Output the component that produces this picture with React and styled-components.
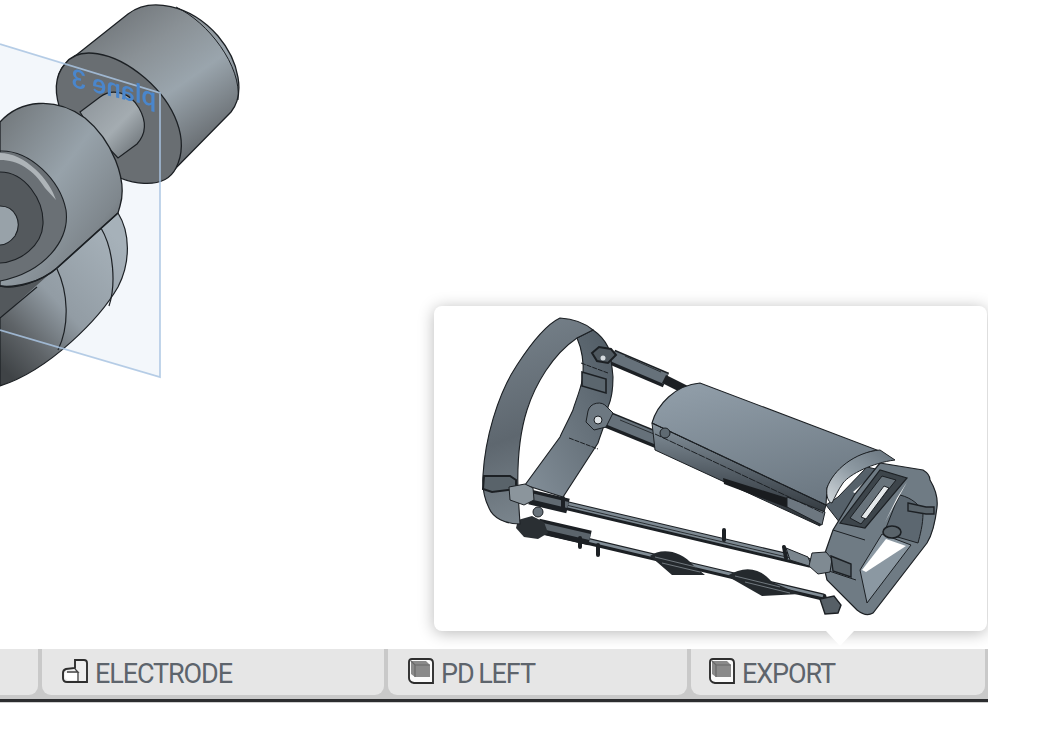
import React from 'react';
import styled, { createGlobalStyle } from 'styled-components';

const GlobalStyle = createGlobalStyle`
  html, body {
    margin: 0;
    height: 100%;
    background: #fff;
    overflow: hidden;
    font-family: Roboto, "Liberation Sans", sans-serif;
  }
`;

const LINE = '#1c2024';

function PartIcon() {
  return (
    <TabIcon viewBox="0 0 26 26">
      <path d="M13 2h9q3 0 3 3v19H5q-4 0-4-4v-5q0-3 3-4l9-1z" fill="#eee" stroke="#2e2e2e" strokeWidth="1.9" />
      <path d="M13 11l3 3H5M16 14v9" fill="none" stroke="#444" strokeWidth="1.3" />
      <path d="M3 15h12v7H6q-3-1-3-3z" fill="#fff" />
    </TabIcon>
  );
}

function AssemblyIcon() {
  return (
    <TabIcon viewBox="0 0 26 26">
      <path d="M4 1h17q4 0 4 4v20H6q-5-1-5-5V4q0-3 3-3z" fill="#fafafa" stroke="#2e2e2e" strokeWidth="1.9" />
      <path d="M3 3h15l4 4v12H7l-4-3z" fill="#8a8a8a" />
      <path d="M3 3l4 4h15M7 7v12" fill="none" stroke="#686868" strokeWidth="1.2" />
    </TabIcon>
  );
}

function PlaneArt() {
  return (
    <Art viewBox="0 0 988 649">
      <defs>
        <linearGradient id="barrel" x1="0.2" y1="0.05" x2="0.85" y2="0.95">
          <stop offset="0" stopColor="#6d7276" />
          <stop offset="0.3" stopColor="#8a9196" />
          <stop offset="0.55" stopColor="#9aa5ad" />
          <stop offset="0.82" stopColor="#70767b" />
          <stop offset="1" stopColor="#505559" />
        </linearGradient>
        <linearGradient id="bulb" x1="0.1" y1="0" x2="0.9" y2="0.9">
          <stop offset="0" stopColor="#747a7e" />
          <stop offset="0.45" stopColor="#97a2aa" />
          <stop offset="0.8" stopColor="#7f878d" />
          <stop offset="1" stopColor="#5d6266" />
        </linearGradient>
        <linearGradient id="lower" x1="0.85" y1="0.1" x2="0.15" y2="1">
          <stop offset="0" stopColor="#a6b1b9" />
          <stop offset="0.5" stopColor="#929ca4" />
          <stop offset="0.78" stopColor="#5f6468" />
          <stop offset="1" stopColor="#3f4346" />
        </linearGradient>
        <linearGradient id="neck" x1="0" y1="0" x2="1" y2="1">
          <stop offset="0" stopColor="#8b9298" />
          <stop offset="0.55" stopColor="#a4acb1" />
          <stop offset="1" stopColor="#5f656a" />
        </linearGradient>
      </defs>

      <path d="M0 44L160 93V377L0 330z" fill="#f3f7fb" />

      <path d="M118 213C130 232 131 262 118 287C100 318 50 370 0 386V270z" fill="url(#lower)" stroke={LINE} strokeWidth="1.2" />
      <path d="M101 228C114 250 116 285 109 306M57 269C68 292 70 325 58 350" fill="none" stroke={LINE} strokeWidth="1.2" />
      <path d="M118 213L57 268C42 282 15 288 0 286V318z" fill="#53585c" />
      <path d="M0 318L37 287" fill="none" stroke={LINE} strokeWidth="1.2" />

      <path d="M65 64L128 14C150 -3 190 4 218 36C240 62 245 95 231 112L172 172C150 190 105 175 80 140C58 112 50 80 65 64z" fill="url(#barrel)" stroke={LINE} strokeWidth="1.3" />
      <path d="M176 7C208 22 242 66 238 100" fill="none" stroke={LINE} strokeWidth="1" />
      <path d="M65 64C78 46 112 50 145 78C175 104 190 140 176 168C165 190 128 188 98 165C70 142 42 90 65 64z" fill="#696e72" stroke={LINE} strokeWidth="1.3" />
      <path d="M80 112L100 97C112 88 130 92 139 108C147 122 146 134 137 144L118 158L90 128z" fill="url(#neck)" stroke={LINE} strokeWidth="1.2" />

      <path d="M0 122C20 100 55 96 85 118C112 140 128 180 120 206L118 213L57 268C40 282 15 290 0 286z" fill="url(#bulb)" stroke={LINE} strokeWidth="1.3" />
      <path d="M0 152C30 150 60 180 66 210C70 240 45 272 0 281z" fill="#6a7075" />
      <path d="M0 172C25 172 44 200 43 224C42 246 20 262 0 263z" fill="#54595d" />
      <path d="M0 206C15 206 23 222 15 236Q8 245 0 245z" fill="#98a2a9" />
      <path d="M0 160C18 160 34 170 45 188L56 200C50 180 25 153 0 153z" fill="#bfc5c9" opacity="0.8" />
      <path d="M0 151C30 150 60 180 66 210C70 240 45 272 0 281M0 206C15 206 23 222 15 236Q8 245 0 245M0 172C25 172 44 200 43 224C42 246 20 262 0 263" fill="none" stroke={LINE} strokeWidth="1.1" />
      <path d="M118 213L57 268C42 282 15 288 0 286" fill="none" stroke={LINE} strokeWidth="1.6" />

      <path d="M0 44L160 93V377L0 330" fill="none" stroke="#a9c4e2" strokeWidth="1.7" opacity="0.85" />
      <PlaneLabel transform="matrix(-1 -0.24 0 1 156 107)">plane 3</PlaneLabel>
    </Art>
  );
}

function DeviceArt() {
  return (
    <Art viewBox="434 306 553 325">
      <defs>
        <linearGradient id="band" x1="0.3" y1="0" x2="0.5" y2="1">
          <stop offset="0" stopColor="#76818a" />
          <stop offset="0.55" stopColor="#5e676f" />
          <stop offset="1" stopColor="#7d8890" />
        </linearGradient>
        <linearGradient id="inner" x1="1" y1="0" x2="0" y2="1">
          <stop offset="0" stopColor="#4f5a63" />
          <stop offset="0.5" stopColor="#69747d" />
          <stop offset="1" stopColor="#84909a" />
        </linearGradient>
        <linearGradient id="top" x1="0.3" y1="0" x2="0.7" y2="1">
          <stop offset="0" stopColor="#8f9ca7" />
          <stop offset="1" stopColor="#6b7781" />
        </linearGradient>
        <linearGradient id="side" x1="0.55" y1="0" x2="0.45" y2="1">
          <stop offset="0" stopColor="#8b98a2" />
          <stop offset="0.55" stopColor="#4d565e" />
          <stop offset="1" stopColor="#23282c" />
        </linearGradient>
        <linearGradient id="cap" x1="0" y1="1" x2="1" y2="0">
          <stop offset="0" stopColor="#d3d9dd" />
          <stop offset="0.5" stopColor="#8d99a2" />
          <stop offset="1" stopColor="#66727c" />
        </linearGradient>
      </defs>

      {/* rods on the open side */}
      <path d="M530 497L810 563" stroke={LINE} strokeWidth="9" strokeLinecap="round" />
      <path d="M530 496L810 562" stroke="#7d8992" strokeWidth="5" />
      <path d="M530 496.5L810 562.5" stroke="#2a2f33" strokeWidth="1" />
      <path d="M540 530L823 597" stroke={LINE} strokeWidth="7" strokeLinecap="round" />
      <path d="M540 529L823 596" stroke="#808c95" strokeWidth="2.8" />
      <path d="M538 526L590 538" stroke={LINE} strokeWidth="15" />
      <path d="M538 525L590 537" stroke="#5b646b" strokeWidth="6" />
      <path d="M530 497L568 506" stroke={LINE} strokeWidth="15" />
      <path d="M530 496L568 505" stroke="#616a71" strokeWidth="6" />
      <path d="M650 556C660 548 680 549 694 566L705 575L672 575z" fill="#24292d" />
      <path d="M727 576C745 565 760 568 772 582L800 594L762 596z" fill="#24292d" />
      <path d="M655 557L696 567M662 563L700 572M735 576L780 587M745 582L790 593" stroke="#70787e" strokeWidth="1" />
      <path d="M724 530v10M784 547l2 11M563 498v12M598 545v10M580 538v9" stroke={LINE} strokeWidth="4" strokeLinecap="round" />
      <path d="M786 548L808 557L812 567L790 560z" fill="#7b868e" stroke={LINE} />
      <path d="M518 520l14-4 12 6 4 11-10 6-14-2-8-9z" fill="#2a2f33" />
      <circle cx="538" cy="512" r="5" fill="#69737b" stroke={LINE} />

      {/* rods towards the case */}
      <path d="M612 357L666 380" stroke={LINE} strokeWidth="16" />
      <path d="M612 356L666 379" stroke="#66717a" strokeWidth="11" />
      <path d="M664 379L690 392" stroke={LINE} strokeWidth="9" />
      <path d="M606 419L660 441" stroke={LINE} strokeWidth="17" />
      <path d="M606 418L660 440" stroke="#66717a" strokeWidth="12" />
      <path d="M625 356l36 16M620 420l34 14" stroke="#2a2f33" strokeWidth="1" />

      {/* left band */}
      <path d="M577 338C581 347 584 362 583 377C580 392 574 405 573 410C566 425 562 432 560 437L525 485L563 497L598 443C602 430 608 418 608 407C613 396 613 385 613 377C612 365 611 357 608 347C604 339 599 334 593 330z" fill="url(#inner)" stroke={LINE} strokeWidth="1.1" />
      <path d="M560 318C575 319 586 324 593 330L577 338C552 355 535 385 527 410C520 432 517 460 518 492L520 524C505 524 493 518 489 508C484 498 482 488 483 475C485 440 497 395 517 365C530 345 545 325 560 318z" fill="url(#band)" stroke={LINE} strokeWidth="1.1" />
      <path d="M581 363L608 373M569 438L598 449" fill="none" stroke={LINE} strokeWidth="1" strokeDasharray="5 1" />
      <path d="M582 372l24 7v14l-24-7z" fill="#5b666e" stroke={LINE} strokeWidth="1.6" />
      <path d="M588 411a11 11 0 0 1 19-4l6 6-7 14-12 3-8-8z" fill="#6d7881" stroke={LINE} />
      <circle cx="598" cy="420" r="4" fill="#dfe4e7" stroke={LINE} />
      <path d="M592 353l7-6 12 2 5 6-8 8-11-2z" fill="#4f585f" stroke={LINE} strokeWidth="2" />
      <circle cx="603" cy="358" r="2.5" fill="#d5dade" />
      <path d="M484 476h26l6 4v9l-24 3-9-3z" fill="#59636a" stroke={LINE} strokeWidth="2" />
      <path d="M509 487l16-3 8 4 1 12-10 5-14-5z" fill="#8b959c" stroke={LINE} />

      {/* case */}
      <path d="M652 423L655 450L820 526L826 505z" fill="url(#side)" stroke={LINE} strokeWidth="1" />
      <path d="M723 478L787 498L788 508L724 484z" fill="#191c1f" />
      <path d="M787 497L825 512L822 525L787 507z" fill="#6d7780" stroke={LINE} />
      <path d="M652 423C657 405 675 385 700 383L877 450C855 455 835 468 827 488L826 505z" fill="url(#top)" stroke={LINE} strokeWidth="1.1" />
      <path d="M652 423L826 505M655 434L823 513" fill="none" stroke={LINE} strokeWidth="1" strokeDasharray="7 1" />
      <circle cx="665" cy="433" r="5" fill="#5f6a72" stroke={LINE} />

      {/* right band */}
      <path d="M826 505L840 523L880 470L867 467L838 497z" fill="#56616a" stroke={LINE} />
      <path d="M853 492L867 480L858 495z" fill="#fff" />
      <path d="M880 463L923 470C928 473 930 477 930 480C936 490 938 498 937 507C935 525 932 535 927 543L873 613C868 616 862 614 857 610L827 580C824 570 824 560 825 553L833 530L855 494z" fill="#6f7b84" stroke={LINE} strokeWidth="1.2" />
      <path d="M900 495C912 498 920 505 923 513C923 525 920 535 918 543L884 533L895 505z" fill="#5c6770" stroke={LINE} />
      <path d="M882 534L911 545L867 603L860 570z" fill="#8b98a2" stroke={LINE} />
      <path d="M886 539L906 546L866 572L862 570z" fill="#fff" />
      <path d="M897 498L907 482L885 522z" fill="#fff" />
      <path d="M840 523L880 470L907 478L865 528z" fill="#3d454b" stroke={LINE} strokeWidth="1.2" />
      <path d="M850 518L882 476L896 480L861 524z" fill="#68737b" stroke={LINE} />
      <path d="M861 517L884 486L889 488L866 519z" fill="#e4e8ea" stroke={LINE} />
      <path d="M827 488C833 470 855 452 880 450L895 460C872 463 850 474 843 483C838 490 835 497 832 503C828 502 826 496 827 488z" fill="url(#cap)" stroke={LINE} strokeWidth="1" />
      <path d="M833 530L865 540M826 570L856 580" fill="none" stroke={LINE} strokeWidth="1" />
      <ellipse cx="892" cy="532" rx="9" ry="6" fill="#59636a" stroke={LINE} strokeWidth="1.6" />
      <path d="M908 503l18 4 8 0v7h-8l-18-3z" fill="#59636a" stroke={LINE} strokeWidth="1.4" />
      <path d="M812 553l14-1 6 7-2 13-12 2-9-8z" fill="#7f8a92" stroke={LINE} />
      <path d="M820 599l14-3 7 9-3 8-13 1z" fill="#565f66" stroke={LINE} strokeWidth="1.4" />
      <path d="M831 556l20 8v13l-18-6z" fill="#59636a" stroke={LINE} strokeWidth="1.4" />
    </Art>
  );
}

const tabs = [
  { name: '', width: 38, inset: 20 },
  { name: 'ELECTRODE', width: 342, inset: 20, Icon: PartIcon },
  { name: 'PD LEFT', width: 299, inset: 20, Icon: AssemblyIcon },
  { name: 'EXPORT', width: 294, inset: 18, Icon: AssemblyIcon },
];

export default function App() {
  return (
    <Page>
      <GlobalStyle />
      <Viewport>
        <PlaneArt />
        <Popover>
          <DeviceArt />
        </Popover>
        <Arrow />
      </Viewport>
      <TabBar>
        {tabs.map(({ name, width, inset, Icon }) => (
          <Tab key={name || 'first'} $width={width} $inset={inset}>
            {Icon && <Icon />}
            {name && <TabName>{name}</TabName>}
          </Tab>
        ))}
      </TabBar>
      <Rule />
    </Page>
  );
}

const Page = styled.div`
  width: 988px;
  display: flex;
  flex-direction: column;
`;

const Viewport = styled.div`
  position: relative;
  height: 649px;
  overflow: hidden;
`;

const Art = styled.svg`
  display: block;
  width: 100%;
  height: 100%;
  filter: blur(0.4px);
`;

const PlaneLabel = styled.text`
  font-family: Roboto, sans-serif;
  font-size: 26px;
  font-weight: 500;
  fill: #4a86cc;
`;

const Popover = styled.div`
  position: absolute;
  left: 434px;
  top: 306px;
  width: 553px;
  height: 325px;
  background: #fff;
  border-radius: 8px;
  box-shadow: 0 2px 16px rgba(0, 0, 0, 0.28);
`;

const Arrow = styled.div`
  position: absolute;
  left: 826px;
  top: 631px;
  width: 0;
  height: 0;
  border-left: 14px solid transparent;
  border-right: 14px solid transparent;
  border-top: 15px solid #fff;
`;

const TabBar = styled.div`
  display: flex;
  gap: 4px;
  height: 50px;
  box-sizing: border-box;
  padding: 0 3px 4px 0;
  background: #c9c9c9;
`;

const Tab = styled.div`
  flex: none;
  box-sizing: border-box;
  width: ${(p) => p.$width}px;
  display: flex;
  align-items: center;
  gap: 7px;
  padding-left: ${(p) => p.$inset}px;
  background: #e6e6e6;
  border-radius: 0 0 9px 9px;

  &:first-child {
    border-radius: 0 0 9px 0;
  }
`;

const TabIcon = styled.svg`
  flex: none;
  width: 26px;
  height: 26px;
  margin-top: -2px;
`;

const TabName = styled.span`
  font-size: 27px;
  letter-spacing: -1.1px;
  word-spacing: -1px;
  line-height: 50px;
  padding-top: 4px;
  color: #5d646c;
`;

const Rule = styled.div`
  height: 3px;
  background: #2c2d2f;
  box-shadow: 0 1px 0 #cfcfcf;
`;
